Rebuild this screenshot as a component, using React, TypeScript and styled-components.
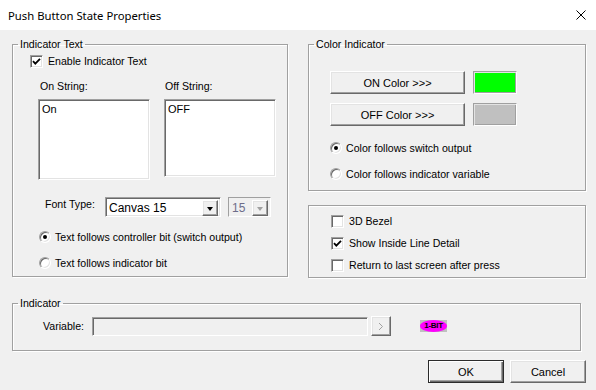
import React from 'react';
import styled, { createGlobalStyle, css } from 'styled-components';

const GlobalStyle = createGlobalStyle`
  html, body {
    margin: 0;
    padding: 0;
    background: #f0f0f0;
  }
  body {
    font-family: "Liberation Sans", Arial, sans-serif;
    font-size: 10.6px;
    color: #000;
  }
`;

const sunken = css`
  box-sizing: border-box;
  border: 1px solid;
  border-color: #a0a0a0 #fff #fff #a0a0a0;
  box-shadow: inset 1px 1px 0 #696969, inset -1px -1px 0 #e3e3e3;
`;

const raised = css`
  box-sizing: border-box;
  border: 1px solid;
  border-color: #fff #696969 #696969 #fff;
  box-shadow: inset -1px -1px 0 #a0a0a0, inset 1px 1px 0 #e3e3e3;
  background: #f0f0f0;
`;

const Window = styled.div`
  width: 596px;
  height: 390px;
  display: flex;
  flex-direction: column;
  background: #f0f0f0;
  overflow: hidden;
`;

const TitleBar = styled.div`
  height: 30px;
  flex: none;
  background: #fff;
  display: flex;
  align-items: center;
  justify-content: space-between;
  padding: 0 10px 0 8px;
`;

const TitleText = styled.span`
  font-family: "Noto Sans", "Open Sans", sans-serif;
  font-size: 11.3px;
`;

const CloseIcon = styled.svg`
  width: 10px;
  height: 10px;
  display: block;
`;

const Body = styled.div`
  padding: 7px 0 0 12px;
  display: flex;
  flex-direction: column;
`;

const TopRow = styled.div`
  display: flex;
  gap: 20px;
  height: 241px;
`;

const Column = styled.div`
  display: flex;
  flex-direction: column;
  gap: 14px;
`;

const GroupBox = styled.fieldset<{ $width: number; $height: number; $top?: number }>`
  box-sizing: border-box;
  width: ${(p) => p.$width}px;
  height: ${(p) => p.$height}px;
  margin: ${(p) => p.$top ?? 0}px 0 0 0;
  padding: 0;
  min-inline-size: 0;
  border: 1px solid #a0a0a0;
  box-shadow: inset 1px 1px 0 #fff, 1px 1px 0 #fff;
`;

const Legend = styled.legend`
  margin-left: 5px;
  padding: 0 2px;
  line-height: 14px;
`;

const Panel = styled.div`
  box-sizing: border-box;
  width: 278px;
  height: 73px;
  border: 1px solid #a0a0a0;
  box-shadow: inset 1px 1px 0 #fff, 1px 1px 0 #fff;
  padding: 4px 0 0 22px;
  display: flex;
  flex-direction: column;
`;

const CheckRow = styled.label<{ $height?: number; $indent?: number; $top?: number }>`
  display: flex;
  align-items: center;
  gap: 5px;
  height: ${(p) => p.$height ?? 22}px;
  padding-left: ${(p) => p.$indent ?? 0}px;
  margin-top: ${(p) => p.$top ?? 0}px;
  line-height: 13px;
`;

const CheckBox = styled.span`
  ${sunken};
  width: 13px;
  height: 13px;
  background: #fff;
  display: flex;
  align-items: center;
  justify-content: center;
  flex: none;
`;

const RadioList = styled.div<{ $indent: number; $top: number }>`
  display: flex;
  flex-direction: column;
  gap: 2px;
  padding-left: ${(p) => p.$indent}px;
  margin-top: ${(p) => p.$top}px;
`;

const RadioRow = styled.label`
  display: flex;
  align-items: center;
  gap: 4px;
  height: 24px;
  line-height: 13px;
`;

const Radio = styled.span<{ $checked?: boolean }>`
  box-sizing: border-box;
  width: 12px;
  height: 12px;
  border-radius: 50%;
  flex: none;
  background: #fff;
  border: 1px solid;
  border-color: #a0a0a0 #fff #fff #a0a0a0;
  box-shadow: inset 1px 1px 0 #696969, inset -1px -1px 0 #e3e3e3;
  position: relative;
  ${(p) =>
    p.$checked &&
    css`
      &::after {
        content: '';
        position: absolute;
        left: 3px;
        top: 3px;
        width: 4px;
        height: 4px;
        border-radius: 50%;
        background: #000;
      }
    `}
`;

const StringsRow = styled.div`
  display: flex;
  gap: 14px;
  padding-left: 25px;
  margin-top: 12px;
`;

const StringField = styled.div`
  display: flex;
  flex-direction: column;
  width: 112px;
`;

const FieldLabel = styled.span<{ $shift: number }>`
  line-height: 13px;
  margin: 0 0 6px ${(p) => p.$shift}px;
`;

const TextBox = styled.div<{ $height: number }>`
  ${sunken};
  height: ${(p) => p.$height}px;
  background: #fff;
  padding: 3px 3px;
  line-height: 13px;
  font-size: 11px;
`;

const FontRow = styled.div`
  display: flex;
  align-items: center;
  padding-left: 32px;
  margin-top: 17px;
  gap: 7px;
`;

const FontLabel = styled.span`
  width: 53px;
  line-height: 13px;
  margin-top: -6px;
`;

const Combo = styled.div<{ $width: number; $disabled?: boolean }>`
  ${sunken};
  width: ${(p) => p.$width}px;
  height: 20px;
  display: flex;
  padding: 2px;
  background: ${(p) => (p.$disabled ? '#f0f0f0' : '#fff')};
  color: ${(p) => (p.$disabled ? '#6d6d8a' : '#000')};
  ${(p) =>
    p.$disabled &&
    css`
      box-shadow: none;
    `}
`;

const ComboText = styled.span`
  flex: 1;
  padding-left: 1px;
  line-height: 16px;
  font-size: 12px;
`;

const ComboArrow = styled.span<{ $disabled?: boolean }>`
  ${raised};
  width: 16px;
  height: 16px;
  display: flex;
  align-items: center;
  justify-content: center;
  &::after {
    content: '';
    border-left: 3.5px solid transparent;
    border-right: 3.5px solid transparent;
    border-top: 4px solid ${(p) => (p.$disabled ? '#a0a0a0' : '#000')};
    margin-top: 1px;
  }
`;

const ColorPanelBody = styled.div`
  display: flex;
  flex-direction: column;
  gap: 9px;
  padding: 20px 0 0 21px;
`;

const ColorRow = styled.div`
  display: flex;
  gap: 8px;
`;

const PushButton = styled.button<{ $width: number; $default?: boolean }>`
  ${raised};
  width: ${(p) => p.$width}px;
  height: 23px;
  padding: 0;
  font-family: inherit;
  font-size: 11px;
  color: #000;
  ${(p) =>
    p.$default &&
    css`
      border: 1px solid #2b2b2b;
      box-shadow: inset 1px 1px 0 #fff, inset -1px -1px 0 #696969, inset -2px -2px 0 #a0a0a0;
    `}
`;

const Swatch = styled.div<{ $color: string }>`
  ${sunken};
  width: 44px;
  height: 23px;
  background: ${(p) => p.$color};
  box-shadow: inset 1px 1px 0 #e3e3e3, inset -1px -1px 0 #a0a0a0;
  border-color: #a0a0a0 #fff #fff #a0a0a0;
`;

const VariableRow = styled.div`
  display: flex;
  align-items: center;
  padding: 6px 0 0 30px;
`;

const VariableLabel = styled.span`
  width: 49px;
  line-height: 13px;
`;

const VariableInput = styled.div`
  ${sunken};
  width: 276px;
  height: 19px;
  background: #f0f0f0;
  box-shadow: inset 1px 1px 0 #696969;
`;

const BrowseButton = styled.span`
  ${raised};
  width: 20px;
  height: 20px;
  margin-left: 3px;
  display: flex;
  align-items: center;
  justify-content: center;
`;

const BitBadge = styled.span`
  margin-left: 29px;
  width: 27px;
  height: 12px;
  background: #c0c0c0;
  display: flex;
`;

const BitEllipse = styled.span`
  flex: 1;
  border-radius: 50%;
  background: #ff00ff;
  display: flex;
  align-items: center;
  justify-content: center;
  font-size: 8px;
  font-weight: bold;
  letter-spacing: -0.3px;
  line-height: 12px;
`;

const Footer = styled.div`
  display: flex;
  justify-content: flex-end;
  gap: 6px;
  margin-top: 9px;
  padding-right: 10px;
`;

function Check({ checked }: { checked?: boolean }) {
  return (
    <CheckBox>
      {checked && (
        <svg width="9" height="9" viewBox="0 0 9 9">
          <path d="M1 4.2 L3.3 6.6 L8 1.8" fill="none" stroke="#000" strokeWidth="1.8" />
        </svg>
      )}
    </CheckBox>
  );
}

export default function App() {
  return (
    <Window>
      <GlobalStyle />
      <TitleBar>
        <TitleText>Push Button State Properties</TitleText>
        <CloseIcon viewBox="0 0 10 10">
          <path d="M0.5 0.5 L9.5 9.5 M9.5 0.5 L0.5 9.5" stroke="#000" strokeWidth="1" />
        </CloseIcon>
      </TitleBar>

      <Body>
        <TopRow>
          <GroupBox $width={276} $height={240}>
            <Legend>Indicator Text</Legend>
            <CheckRow $height={13} $indent={17} $top={4}>
              <Check checked />
              Enable Indicator Text
            </CheckRow>

            <StringsRow>
              <StringField>
                <FieldLabel $shift={2}>On String:</FieldLabel>
                <TextBox $height={81}>On</TextBox>
              </StringField>
              <StringField>
                <FieldLabel $shift={1}>Off String:</FieldLabel>
                <TextBox $height={78}>OFF</TextBox>
              </StringField>
            </StringsRow>

            <FontRow>
              <FontLabel>Font Type:</FontLabel>
              <Combo $width={116}>
                <ComboText>Canvas 15</ComboText>
                <ComboArrow />
              </Combo>
              <Combo $width={43} $disabled>
                <ComboText>15</ComboText>
                <ComboArrow $disabled />
              </Combo>
            </FontRow>

            <RadioList $indent={26} $top={8}>
              <RadioRow>
                <Radio $checked />
                Text follows controller bit (switch output)
              </RadioRow>
              <RadioRow>
                <Radio />
                Text follows indicator bit
              </RadioRow>
            </RadioList>
          </GroupBox>

          <Column>
            <GroupBox $width={278} $height={154}>
              <Legend>Color Indicator</Legend>
              <ColorPanelBody>
                <ColorRow>
                  <PushButton $width={135}>ON Color &gt;&gt;&gt;</PushButton>
                  <Swatch $color="#00ff00" />
                </ColorRow>
                <ColorRow>
                  <PushButton $width={135}>OFF Color &gt;&gt;&gt;</PushButton>
                  <Swatch $color="#c0c0c0" />
                </ColorRow>
              </ColorPanelBody>
              <RadioList $indent={21} $top={10}>
                <RadioRow>
                  <Radio $checked />
                  Color follows switch output
                </RadioRow>
                <RadioRow>
                  <Radio />
                  Color follows indicator variable
                </RadioRow>
              </RadioList>
            </GroupBox>

            <Panel>
              <CheckRow>
                <Check />
                3D Bezel
              </CheckRow>
              <CheckRow>
                <Check checked />
                Show Inside Line Detail
              </CheckRow>
              <CheckRow>
                <Check />
                Return to last screen after press
              </CheckRow>
            </Panel>
          </Column>
        </TopRow>

        <GroupBox $width={569} $height={55} $top={18}>
          <Legend>Indicator</Legend>
          <VariableRow>
            <VariableLabel>Variable:</VariableLabel>
            <VariableInput />
            <BrowseButton>
              <svg width="6" height="9" viewBox="0 0 6 9">
                <path d="M1 1 L4.5 4.5 L1 8" fill="none" stroke="#a0a0a0" strokeWidth="1" />
              </svg>
            </BrowseButton>
            <BitBadge>
              <BitEllipse>1-BIT</BitEllipse>
            </BitBadge>
          </VariableRow>
        </GroupBox>

        <Footer>
          <PushButton $width={76} $default>OK</PushButton>
          <PushButton $width={76}>Cancel</PushButton>
        </Footer>
      </Body>
    </Window>
  );
}
